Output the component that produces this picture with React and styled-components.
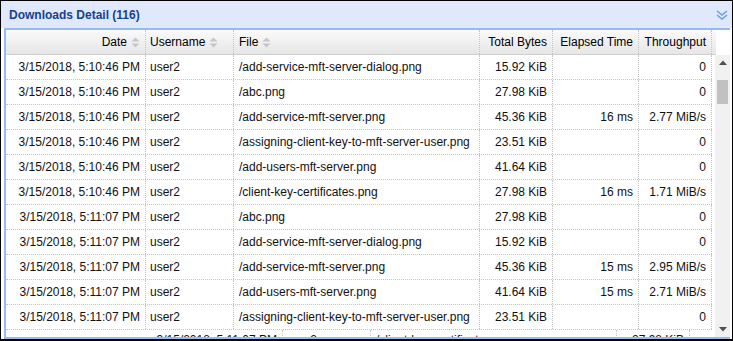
import React from "react";
import styled, { createGlobalStyle } from "styled-components";

const GlobalStyle = createGlobalStyle`
  html, body {
    margin: 0;
    padding: 0;
    background: #fff;
  }
  body {
    font-family: "Liberation Sans", Arial, sans-serif;
    font-size: 12px;
    color: #000;
  }
`;

const COLS = "140px 88px 246px 73px 86px 73px";

const Frame = styled.div`
  box-sizing: border-box;
  width: 733px;
  height: 341px;
  border: 1px solid #000;
  border-bottom-width: 2px;
  background: #fff;
  display: flex;
  flex-direction: column;
  overflow: hidden;
`;

const TitleBar = styled.div`
  height: 27px;
  flex: none;
  background: #dfe9fb;
  display: flex;
  align-items: center;
  justify-content: space-between;
  padding: 0 4px 0 8px;
`;

const Title = styled.span`
  font-weight: bold;
  font-size: 12px;
  color: #15428b;
`;

const GridBox = styled.div`
  flex: 1;
  min-height: 0;
  margin: 0 2px 0 3px;
  border: 2px solid #99bbe8;
  border-right: none;
  display: flex;
  flex-direction: column;
`;

const HeaderWrap = styled.div`
  display: flex;
  height: 25px;
  flex: none;
`;

const HeaderBar = styled.div`
  width: 710px;
  display: flex;
  background: linear-gradient(#fafafa, #e6e6e6);
  border-bottom: 1px solid #d0d0d0;
  box-sizing: border-box;
`;

const ColumnGrid = styled.div`
  display: grid;
  grid-template-columns: ${COLS};
  width: 706px;
`;

const HeadCell = styled.div`
  box-sizing: border-box;
  border-right: 1px dotted #c4c4c4;
  display: flex;
  align-items: center;
  justify-content: ${p => (p.$right ? "flex-end" : "flex-start")};
  padding: 0 ${p => (p.$right ? "5px" : "4px")} 0 ${p => (p.$pl || "4px")};
  line-height: 24px;
  white-space: nowrap;
  color: #000;
`;

const SortIcon = styled.svg`
  margin-left: 4px;
  flex: none;
`;

const Body = styled.div`
  flex: 1;
  min-height: 0;
  display: flex;
`;

const RowsArea = styled.div`
  width: 710px;
  overflow: hidden;
`;

const Row = styled.div`
  display: grid;
  grid-template-columns: ${COLS};
  width: 706px;
  height: 25px;
  box-sizing: border-box;
  border-bottom: 1px dotted #c4c4c4;
  margin-left: ${p => p.$shift || 0};
`;

const Cell = styled.div`
  box-sizing: border-box;
  border-right: 1px dotted #c4c4c4;
  line-height: ${p => p.$lh || "24px"};
  padding: ${p => (p.$right ? "0 5px 0 0" : `0 0 0 ${p.$pl || "4px"}`)};
  text-align: ${p => (p.$right ? "right" : "left")};
  white-space: nowrap;
  overflow: hidden;
  color: #111;
`;

const ScrollBar = styled.div`
  width: 15px;
  margin-left: auto;
  background: #f1f1f1;
  display: flex;
  flex-direction: column;
  align-items: center;
`;

const ArrowBox = styled.div`
  height: 15px;
  width: 15px;
  display: flex;
  align-items: center;
  justify-content: center;
  margin-top: ${p => (p.$bottom ? "auto" : "0")};
`;

const Thumb = styled.div`
  margin-top: 10px;
  width: 11px;
  height: 24px;
  background: #c1c1c1;
`;

const columns = [
  { label: "Date", right: true, sort: true },
  { label: "Username", sort: true },
  { label: "File", sort: true, pl: "5px" },
  { label: "Total Bytes", right: true },
  { label: "Elapsed Time", right: true },
  { label: "Throughput", right: true },
];

const rows = [
  ["3/15/2018, 5:10:46 PM", "user2", "/add-service-mft-server-dialog.png", "15.92 KiB", "", "0"],
  ["3/15/2018, 5:10:46 PM", "user2", "/abc.png", "27.98 KiB", "", "0"],
  ["3/15/2018, 5:10:46 PM", "user2", "/add-service-mft-server.png", "45.36 KiB", "16 ms", "2.77 MiB/s"],
  ["3/15/2018, 5:10:46 PM", "user2", "/assigning-client-key-to-mft-server-user.png", "23.51 KiB", "", "0"],
  ["3/15/2018, 5:10:46 PM", "user2", "/add-users-mft-server.png", "41.64 KiB", "", "0"],
  ["3/15/2018, 5:10:46 PM", "user2", "/client-key-certificates.png", "27.98 KiB", "16 ms", "1.71 MiB/s"],
  ["3/15/2018, 5:11:07 PM", "user2", "/abc.png", "27.98 KiB", "", "0"],
  ["3/15/2018, 5:11:07 PM", "user2", "/add-service-mft-server-dialog.png", "15.92 KiB", "", "0"],
  ["3/15/2018, 5:11:07 PM", "user2", "/add-service-mft-server.png", "45.36 KiB", "15 ms", "2.95 MiB/s"],
  ["3/15/2018, 5:11:07 PM", "user2", "/add-users-mft-server.png", "41.64 KiB", "15 ms", "2.71 MiB/s"],
  ["3/15/2018, 5:11:07 PM", "user2", "/assigning-client-key-to-mft-server-user.png", "23.51 KiB", "", "0"],
];

const partial = ["3/15/2018, 5:11:07 PM", "user2", "/client-key-certificates.png", "27.98 KiB"];

const Sort = () => (
  <SortIcon width="9" height="11" viewBox="0 0 9 11">
    <path d="M4.5 0.5 L8.5 4.5 L0.5 4.5 Z" fill="#c6c6c6" />
    <path d="M0.5 6.5 L8.5 6.5 L4.5 10.5 Z" fill="#c6c6c6" />
  </SortIcon>
);

const Collapse = () => (
  <svg width="12" height="10" viewBox="0 0 12 10">
    <path d="M1 1 L6 5 L11 1" fill="none" stroke="#6d9ee0" strokeWidth="1.6" />
    <path d="M1 5 L6 9 L11 5" fill="none" stroke="#6d9ee0" strokeWidth="1.6" />
  </svg>
);

const Tri = ({ down }) => (
  <svg width="8" height="5" viewBox="0 0 8 5">
    <path d={down ? "M0 0 L8 0 L4 4.5 Z" : "M4 0.5 L8 5 L0 5 Z"} fill="#505050" />
  </svg>
);

export default function App() {
  return (
    <>
      <GlobalStyle />
      <Frame>
        <TitleBar>
          <Title>Downloads Detail (116)</Title>
          <Collapse />
        </TitleBar>
        <GridBox>
          <HeaderWrap>
            <HeaderBar>
              <ColumnGrid>
                {columns.map(c => (
                  <HeadCell key={c.label} $right={c.right} $pl={c.pl}>
                    {c.label}
                    {c.sort && <Sort />}
                  </HeadCell>
                ))}
              </ColumnGrid>
            </HeaderBar>
          </HeaderWrap>
          <Body>
            <RowsArea>
              {rows.map((r, i) => (
                <Row key={i}>
                  <Cell $right>{r[0]}</Cell>
                  <Cell>{r[1]}</Cell>
                  <Cell $pl="5px">{r[2]}</Cell>
                  <Cell $right>{r[3]}</Cell>
                  <Cell $right>{r[4]}</Cell>
                  <Cell $right>{r[5]}</Cell>
                </Row>
              ))}
              <Row $shift="137px">
                <Cell $right $lh="20px">{partial[0]}</Cell>
                <Cell $lh="20px">{partial[1]}</Cell>
                <Cell $pl="5px" $lh="20px">{partial[2]}</Cell>
                <Cell $right $lh="20px">{partial[3]}</Cell>
                <Cell $lh="20px" />
                <Cell $lh="20px" />
              </Row>
            </RowsArea>
            <ScrollBar>
              <ArrowBox>
                <Tri />
              </ArrowBox>
              <Thumb />
              <ArrowBox $bottom>
                <Tri down />
              </ArrowBox>
            </ScrollBar>
          </Body>
        </GridBox>
      </Frame>
    </>
  );
}
